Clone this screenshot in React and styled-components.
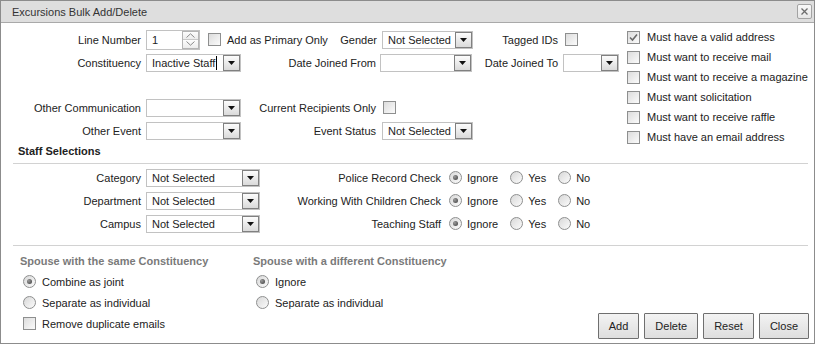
import React from "react";
import styled, { createGlobalStyle } from "styled-components";

const GlobalStyle = createGlobalStyle`
  * { box-sizing: border-box; }
  body {
    margin: 0;
    background: #fff;
    font-family: "Liberation Sans", Arial, sans-serif;
    font-size: 11px;
    color: #222;
  }
`;

// Icons
const ArrowDown = () => (
  <svg width="7" height="4" viewBox="0 0 7 4">
    <polygon points="0,0 7,0 3.5,4" fill="#111" />
  </svg>
);

const Chevron = ({ up }) => (
  <svg width="9" height="5" viewBox="0 0 9 5">
    <polyline
      points={up ? "0.5,4.5 4.5,0.8 8.5,4.5" : "0.5,0.5 4.5,4.2 8.5,0.5"}
      fill="none"
      stroke="#8a8a8a"
      strokeWidth="1"
    />
  </svg>
);

const CloseX = () => (
  <svg width="7" height="7" viewBox="0 0 7 7">
    <path d="M0.5 0.5 L6.5 6.5 M6.5 0.5 L0.5 6.5" stroke="#6c6c6c" strokeWidth="1.3" />
  </svg>
);

const Tick = () => (
  <svg width="11" height="11" viewBox="0 0 11 11">
    <polyline points="2,5.5 4.5,8 9,2.5" fill="none" stroke="#6a6a6a" strokeWidth="1.6" />
  </svg>
);

// Frame
const Dialog = styled.div`
  width: 815px;
  height: 344px;
  border: 1px solid #8c8c8c;
  background: #fff;
  display: flex;
  flex-direction: column;
`;

const TitleBar = styled.div`
  flex: none;
  height: 22px;
  background: #dedede;
  border-bottom: 1px solid #a9a9a9;
  display: flex;
  align-items: center;
  justify-content: space-between;
  padding: 0 2px 0 11px;
  color: #333;
`;

const CloseButton = styled.div`
  width: 15px;
  height: 15px;
  border: 1px solid #a3a3a3;
  border-radius: 2px;
  background: linear-gradient(#f9f9f9, #e6e6e6);
  display: flex;
  align-items: center;
  justify-content: center;
`;

const Body = styled.div`
  flex: 1;
  display: flex;
  flex-direction: column;
  padding: 5px 6px 4px 12px;
`;

// Form parts
const TopSection = styled.div`
  display: flex;
  align-items: flex-start;
`;

const FieldGrid = styled.div`
  display: grid;
  grid-template-columns: 133px 95px 140px 92px 90px 56px;
  grid-template-rows: 23px 23px 22px 23px 23px;
  align-items: center;
`;

const StaffGrid = styled.div`
  display: grid;
  grid-template-columns: 133px 114px 189px auto;
  grid-auto-rows: 23px;
  align-items: center;
  padding: 2px 0 10px;
  border-bottom: 1px solid #d2d2d2;
`;

const Spacer = styled.div`
  grid-column: ${(p) => (p.$span ? `span ${p.$span}` : "1 / -1")};
`;

const Label = styled.span`
  justify-self: end;
  padding-right: ${(p) => (p.$pr ?? 5)}px;
  white-space: nowrap;
`;

const Cell = styled.div`
  display: flex;
  align-items: center;
  white-space: nowrap;
  margin-left: ${(p) => p.$ml || 0}px;
`;

const SelectBox = styled.div`
  flex: none;
  width: ${(p) => p.$w}px;
  height: 18px;
  margin-left: ${(p) => p.$ml || 0}px;
  border: 1px solid #c2c2c2;
  background: #fff;
  display: flex;
  align-items: center;
`;

const SelectValue = styled.span`
  flex: 1;
  display: flex;
  align-items: center;
  padding-left: 5px;
  white-space: nowrap;
  overflow: hidden;
`;

const Caret = styled.span`
  width: 1px;
  height: 14px;
  background: #000;
  margin-left: 1px;
`;

const ArrowButton = styled.span`
  flex: none;
  width: 17px;
  height: 16px;
  border: 1px solid #808080;
  background: linear-gradient(#fcfcfc, #dadada);
  display: flex;
  align-items: center;
  justify-content: center;
`;

const SpinBox = styled.div`
  flex: none;
  width: 54px;
  height: 20px;
  border: 1px solid #c2c2c2;
  display: flex;
  align-items: center;
  padding-left: 5px;
`;

const SpinValue = styled.span`
  flex: 1;
`;

const SpinButtons = styled.div`
  flex: none;
  width: 17px;
  height: 18px;
  border: 1px solid #b4b4b4;
  display: flex;
  flex-direction: column;
`;

const SpinHalf = styled.span`
  flex: 1;
  display: flex;
  align-items: center;
  justify-content: center;
  background: linear-gradient(#fdfdfd, #ececec);
  & + & {
    border-top: 1px solid #c8c8c8;
  }
`;

const Box = styled.span`
  flex: none;
  width: 13px;
  height: 13px;
  border: 1px solid #8e8f8f;
  background: linear-gradient(135deg, #dcdcdc, #fbfbfb);
  display: flex;
  align-items: center;
  justify-content: center;
  margin-left: ${(p) => p.$ml || 0}px;
`;

const Round = styled.span`
  flex: none;
  width: 13px;
  height: 13px;
  border: 1px solid #8e8f8f;
  border-radius: 50%;
  background: linear-gradient(135deg, #d8d8d8, #fbfbfb);
  display: flex;
  align-items: center;
  justify-content: center;
  &::after {
    content: "";
    display: ${(p) => (p.$on ? "block" : "none")};
    width: 5px;
    height: 5px;
    border-radius: 50%;
    background: radial-gradient(circle at 35% 35%, #9a9a9a, #3c3c3c);
  }
`;

const Option = styled.label`
  flex: none;
  display: flex;
  align-items: center;
  white-space: nowrap;
  gap: ${(p) => p.$gap ?? 6}px;
  margin-left: ${(p) => p.$ml || 0}px;
`;

const RadioGroup = styled.div`
  display: flex;
  align-items: center;
  gap: 12px;
`;

const CheckList = styled.div`
  margin: -1px 0 0 8px;
  display: flex;
  flex-direction: column;
`;

const CheckRow = styled(Option)`
  height: 20px;
  gap: 7px;
`;

const SectionTitle = styled.div`
  margin-top: -2px;
  padding: 0 0 5px 5px;
  line-height: 13px;
  font-weight: bold;
  border-bottom: 1px solid #d2d2d2;
`;

const SpouseSection = styled.div`
  flex: 1;
  display: flex;
  padding: 9px 0 0 7px;
`;

const SpouseColumn = styled.div`
  width: ${(p) => (p.$w ? `${p.$w}px` : "auto")};
  flex: ${(p) => (p.$w ? "none" : 1)};
  display: flex;
  flex-direction: column;
`;

const SpouseTitle = styled.div`
  line-height: 13px;
  margin-bottom: 3px;
  font-weight: bold;
  color: #7a7a7a;
`;

const SpouseRow = styled(Option)`
  height: 21px;
  padding-left: 3px;
`;

const ButtonBar = styled.div`
  align-self: flex-end;
  display: flex;
  gap: 5px;
  margin-right: -1px;
`;

const Button = styled.button`
  height: 26px;
  padding: 0 10px;
  border: 1px solid #6f6f6f;
  border-radius: 1px;
  background: linear-gradient(#f3f3f3, #dedede);
  font-family: inherit;
  font-size: 11px;
  color: #222;
`;

const Select = ({ w, value, caret, ml }) => (
  <SelectBox $w={w} $ml={ml}>
    <SelectValue>
      {value}
      {caret && <Caret />}
    </SelectValue>
    <ArrowButton>
      <ArrowDown />
    </ArrowButton>
  </SelectBox>
);

const Check = ({ checked, ml }) => <Box $ml={ml}>{checked && <Tick />}</Box>;

const mustHave = [
  ["Must have a valid address", true],
  ["Must want to receive mail", false],
  ["Must want to receive a magazine", false],
  ["Must want solicitation", false],
  ["Must want to receive raffle", false],
  ["Must have an email address", false],
];

const staffRows = [
  ["Category", "Police Record Check"],
  ["Department", "Working With Children Check"],
  ["Campus", "Teaching Staff"],
];

const App = () => (
  <>
    <GlobalStyle />
    <Dialog>
      <TitleBar>
        <span>Excursions Bulk Add/Delete</span>
        <CloseButton>
          <CloseX />
        </CloseButton>
      </TitleBar>
      <Body>
        <TopSection>
          <FieldGrid>
            <Label>Line Number</Label>
            <Cell>
              <SpinBox>
                <SpinValue>1</SpinValue>
                <SpinButtons>
                  <SpinHalf>
                    <Chevron up />
                  </SpinHalf>
                  <SpinHalf>
                    <Chevron />
                  </SpinHalf>
                </SpinButtons>
              </SpinBox>
              <Option $ml={8}>
                <Check />
                Add as Primary Only
              </Option>
            </Cell>
            <Label $pr={4}>Gender</Label>
            <Select w={91} ml={1} value="Not Selected" />
            <Label>Tagged IDs</Label>
            <Cell $ml={2}>
              <Check />
            </Cell>

            <Label>Constituency</Label>
            <Select w={95} value="Inactive Staff" caret />
            <Label>Date Joined From</Label>
            <Select w={92} ml={-1} value="" />
            <Label>Date Joined To</Label>
            <Select w={56} value="" />

            <Spacer />

            <Label>Other Communication</Label>
            <Select w={95} value="" />
            <Label>Current Recipients Only</Label>
            <Cell $ml={2}>
              <Check />
            </Cell>
            <Spacer $span={2} />

            <Label>Other Event</Label>
            <Select w={95} value="" />
            <Label>Event Status</Label>
            <Select w={91} ml={1} value="Not Selected" />
          </FieldGrid>
          <CheckList>
            {mustHave.map(([text, on]) => (
              <CheckRow key={text}>
                <Check checked={on} />
                {text}
              </CheckRow>
            ))}
          </CheckList>
        </TopSection>

        <SectionTitle>Staff Selections</SectionTitle>
        <StaffGrid>
          {staffRows.map(([name, check]) => (
            <React.Fragment key={name}>
              <Label>{name}</Label>
              <Select w={114} value="Not Selected" />
              <Label $pr={8}>{check}</Label>
              <RadioGroup>
                <Option $gap={5}>
                  <Round $on />
                  Ignore
                </Option>
                <Option $gap={5}>
                  <Round />
                  Yes
                </Option>
                <Option $gap={5}>
                  <Round />
                  No
                </Option>
              </RadioGroup>
            </React.Fragment>
          ))}
        </StaffGrid>

        <SpouseSection>
          <SpouseColumn $w={233}>
            <SpouseTitle>Spouse with the same Constituency</SpouseTitle>
            <SpouseRow>
              <Round $on />
              Combine as joint
            </SpouseRow>
            <SpouseRow>
              <Round />
              Separate as individual
            </SpouseRow>
            <SpouseRow>
              <Check />
              Remove duplicate emails
            </SpouseRow>
          </SpouseColumn>
          <SpouseColumn>
            <SpouseTitle>Spouse with a different Constituency</SpouseTitle>
            <SpouseRow>
              <Round $on />
              Ignore
            </SpouseRow>
            <SpouseRow>
              <Round />
              Separate as individual
            </SpouseRow>
          </SpouseColumn>
          <ButtonBar>
            <Button>Add</Button>
            <Button>Delete</Button>
            <Button>Reset</Button>
            <Button>Close</Button>
          </ButtonBar>
        </SpouseSection>
      </Body>
    </Dialog>
  </>
);

export default App;
